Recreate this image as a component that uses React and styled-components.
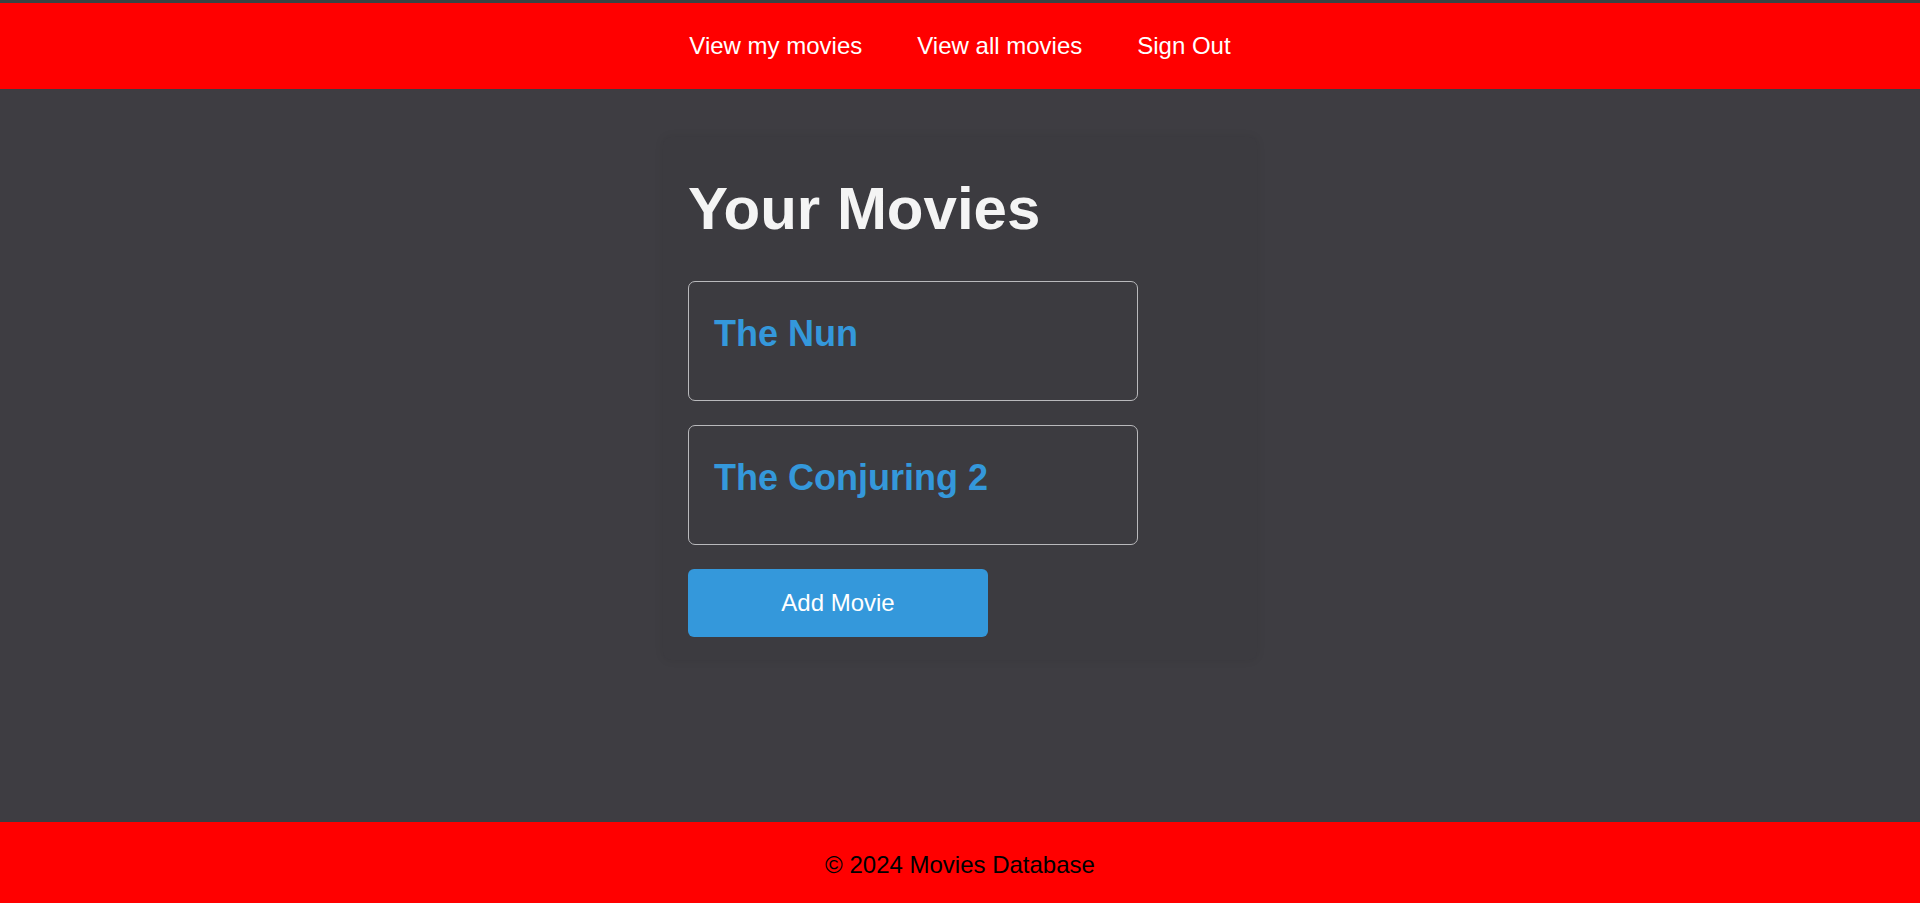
import React from "react"
import styled, {createGlobalStyle} from "styled-components"

const GlobalStyle = createGlobalStyle`
    html, body {
        margin: 0;
        padding: 0;
        background: #3e3d42;
        font-family: "Liberation Sans", Arial, sans-serif;
    }
    #root {
        min-height: 100vh;
    }
`

const Page = styled.div`
    display: flex;
    flex-direction: column;
    min-height: 100vh;
`

const Header = styled.header`
    height: 86px;
    border-top: 3px solid #394343;
    background: #ff0000;
    display: flex;
    align-items: center;
    justify-content: center;
`

const Nav = styled.nav`
    display: flex;
    gap: 55px;
`

const NavItem = styled.a`
    font-size: 24px;
    color: #fff;
    text-decoration: none;
    cursor: pointer;
`

const Main = styled.main`
    flex: 1;
    display: flex;
    justify-content: center;
    align-items: flex-start;
    padding-top: 48px;
`

const Card = styled.section`
    width: 594px;
    box-sizing: border-box;
    padding: 25px 25px 23px;
    background: #3c3b40;
    border-radius: 8px;
    box-shadow: 0 0 10px rgba(0, 0, 0, 0.08);
`

const Title = styled.h1`
    font-size: 60px;
    font-weight: bold;
    line-height: 1.15;
    color: #f4f4f4;
    margin: 12px 0 38px;
`

const MovieList = styled.div`
    display: flex;
    flex-direction: column;
    gap: 24px;
`

const MovieItem = styled.div`
    width: 450px;
    height: 120px;
    box-sizing: border-box;
    padding: 20px 25px;
    border: 1px solid #b9b9bc;
    border-radius: 7px;
`

const MovieTitle = styled.h2`
    font-size: 36px;
    font-weight: bold;
    line-height: 1.15;
    color: #3498db;
    margin: 11px 0 0;
`

const AddButton = styled.button`
    display: block;
    margin-top: 24px;
    width: 300px;
    height: 68px;
    border: none;
    border-radius: 6px;
    background: #3498db;
    color: #fff;
    font-family: "Liberation Sans", Arial, sans-serif;
    font-size: 24px;
    cursor: pointer;
`

const Footer = styled.footer`
    height: 81px;
    box-sizing: border-box;
    padding-top: 4px;
    background: #ff0000;
    display: flex;
    align-items: center;
    justify-content: center;
    font-size: 24px;
    color: #000;
`

const movies = ["The Nun", "The Conjuring 2"]

export default function App() {
    return (
        <Page>
            <GlobalStyle/>
            <Header>
                <Nav>
                    <NavItem>View my movies</NavItem>
                    <NavItem>View all movies</NavItem>
                    <NavItem>Sign Out</NavItem>
                </Nav>
            </Header>
            <Main>
                <Card>
                    <Title>Your Movies</Title>
                    <MovieList>
                        {movies.map(m => (
                            <MovieItem key={m}>
                                <MovieTitle>{m}</MovieTitle>
                            </MovieItem>
                        ))}
                    </MovieList>
                    <AddButton>Add Movie</AddButton>
                </Card>
            </Main>
            <Footer>&copy; 2024 Movies Database</Footer>
        </Page>
    )
}
